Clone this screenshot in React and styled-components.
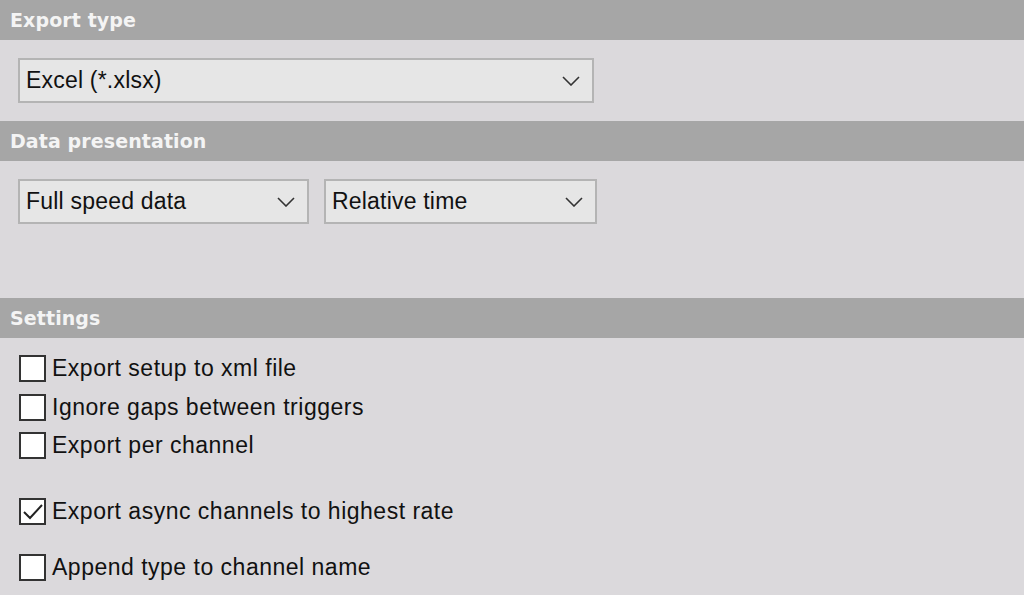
import React from "react";
import styled, { createGlobalStyle } from "styled-components";

const Global = createGlobalStyle`
  html, body { margin: 0; padding: 0; background: #dbd9dc; }
  body { font-family: "Liberation Sans", Arial, sans-serif; }
`;

const Page = styled.div`
  width: 1024px; height: 595px; overflow: hidden; background: #dbd9dc;
`;
const Header = styled.div`
  height: 40px; background: #a6a6a6; color: #f4f4f4;
  font-family: "DejaVu Sans", Verdana, sans-serif; font-weight: bold; font-size: 19px;
  display: flex; align-items: center; padding-left: 10px; letter-spacing: 0.1px;
`;
const Section = styled.div`
  height: ${p => p.h}px; box-sizing: border-box; padding: ${p => p.pt || 18}px 18px 0;
  display: flex; flex-direction: column;
`;
const Row = styled.div` display: flex; gap: 15px; `;
const Select = styled.div`
  width: ${p => p.w}px; height: 45px; box-sizing: border-box;
  background: #e6e6e6; border: 2px solid #b4b4b4;
  display: flex; align-items: center; justify-content: space-between;
  padding: 0 12px 0 6px; font-size: 23px; letter-spacing: 0.2px; color: #111;
`;
const Check = styled.label`
  display: flex; align-items: center; gap: 6px; height: 27px;
  font-size: 23px; letter-spacing: 0.5px; color: #111; margin-top: ${p => p.mt}px; margin-left: 1px;
`;
const Box = styled.span`
  width: 27px; height: 27px; box-sizing: border-box; border: 2px solid #333;
  background: #fff; display: flex; align-items: center; justify-content: center;
`;

const Chev = () => (
  <svg width="18" height="10" viewBox="0 0 18 10"><path d="M1 1l8 8 8-8" fill="none" stroke="#333" strokeWidth="1.6"/></svg>
);

const Cb = ({ label, mt, checked }) => (
  <Check mt={mt}>
    <Box>{checked && <svg width="22" height="18" viewBox="0 0 22 18"><path d="M2 9l6 6L20 2" fill="none" stroke="#222" strokeWidth="2"/></svg>}</Box>
    {label}
  </Check>
);

export default function App() {
  return (
    <Page>
      <Global />
      <Header>Export type</Header>
      <Section h={81}>
        <Select w={576}>Excel (*.xlsx)<Chev /></Select>
      </Section>
      <Header>Data presentation</Header>
      <Section h={137}>
        <Row>
          <Select w={291}>Full speed data<Chev /></Select>
          <Select w={273}>Relative time<Chev /></Select>
        </Row>
      </Section>
      <Header>Settings</Header>
      <Section h={258} pt={17}>
        <Cb label="Export setup to xml file" mt={0} />
        <Cb label="Ignore gaps between triggers" mt={12} />
        <Cb label="Export per channel" mt={11} />
        <Cb label="Export async channels to highest rate" mt={39} checked />
        <Cb label="Append type to channel name" mt={29} />
      </Section>
    </Page>
  );
}
